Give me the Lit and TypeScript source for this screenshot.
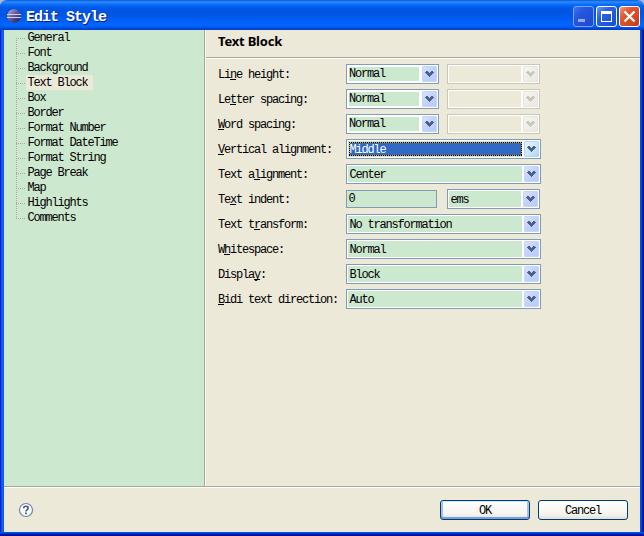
import { LitElement, html, svg, css, nothing } from "lit";
import { customElement, property } from "lit/decorators.js";
import { classMap } from "lit/directives/class-map.js";

const PAGES = [
  "General", "Font", "Background", "Text Block", "Box", "Border", "Format Number",
  "Format DateTime", "Format String", "Page Break", "Map", "Highlights", "Comments",
];

type Kind = "unit" | "wide" | "indent";
interface Row { before: string; key: string; after: string; value: string; kind: Kind; focus?: boolean; }

const ROWS: Row[] = [
  { before: "Li", key: "n", after: "e height:", value: "Normal", kind: "unit" },
  { before: "Le", key: "t", after: "ter spacing:", value: "Normal", kind: "unit" },
  { before: "", key: "W", after: "ord spacing:", value: "Normal", kind: "unit" },
  { before: "", key: "V", after: "ertical alignment:", value: "Middle", kind: "wide", focus: true },
  { before: "Text a", key: "l", after: "ignment:", value: "Center", kind: "wide" },
  { before: "Te", key: "x", after: "t indent:", value: "0", kind: "indent" },
  { before: "Text t", key: "r", after: "ansform:", value: "No transformation", kind: "wide" },
  { before: "W", key: "h", after: "itespace:", value: "Normal", kind: "wide" },
  { before: "Displa", key: "y", after: ":", value: "Block", kind: "wide" },
  { before: "", key: "B", after: "idi text direction:", value: "Auto", kind: "wide" },
];

@customElement("xp-combo")
export class XpCombo extends LitElement {
  @property() value = "";
  @property() variant = "wide";
  @property({ type: Boolean }) focused = false;

  static styles = css`
    :host { display: block; height: 20px; }
    .combo {
      box-sizing: border-box; height: 20px; border: 1px solid #7f9db9; background: #fff;
      display: flex; padding: 1px; gap: 2px;
    }
    .field {
      flex: 1; min-width: 0; background: #cce8cf; color: #000; height: 16px;
      line-height: 18px; padding-left: 1.5px; box-sizing: border-box; white-space: pre; overflow: hidden;
    }
    .arrow {
      width: 15px; height: 16px; flex: none; border-radius: 2px;
      background: linear-gradient(135deg, #dce6ff, #c3d3fd 45%, #b5caf8);
      box-shadow: inset 0 0 0 1px #c7d5fb;
    }
    .arrow svg { display: block; }
    .small { gap: 3px; }
    .small .field { margin: 1px 0 1px 1px; height: 14px; line-height: 14px; padding-left: 0; }
    .disabled { border-color: #c9c7ba; }
    .disabled .field { background: #ece9d8; }
    .disabled .arrow { background: linear-gradient(135deg, #f7f7f3, #e8e8df); box-shadow: inset 0 0 0 1px #e6e5dc; }
    .focused .field { padding: 1px 0 1px 1px; }
    .selection {
      height: 14px; line-height: 16px; box-sizing: border-box; padding-left: 0.5px; color: #fff;
      background:
        repeating-linear-gradient(90deg, #000 0 1px, #e8a33c 1px 2px) 0 0 / 100% 1px no-repeat,
        repeating-linear-gradient(90deg, #000 0 1px, #e8a33c 1px 2px) 0 100% / 100% 1px no-repeat,
        repeating-linear-gradient(#000 0 1px, #e8a33c 1px 2px) 0 0 / 1px 100% no-repeat,
        repeating-linear-gradient(#000 0 1px, #e8a33c 1px 2px) 100% 0 / 1px 100% no-repeat,
        #316ac5;
    }
    .focused .arrow { background: linear-gradient(135deg, #edf7ff, #c6e4fd 60%, #a9d2f8); box-shadow: inset 0 0 0 1px #b5d5f5; }
  `;

  render() {
    const color = this.variant === "disabled" ? "#c9c7ba" : "#4d6185";
    return html`<div class=${classMap({ combo: true, [this.variant]: true, focused: this.focused })}>
      <div class="field">${this.focused ? html`<div class="selection">${this.value}</div>` : this.value}</div>
      <div class="arrow">
        <svg width="15" height="16" viewBox="0 0 15 16" shape-rendering="crispEdges">
          <path fill=${color} d="M3 6h1V5h2v1h1v1h1V6h1V5h2v1h1v1h-1v1h-1v1H9v1H8v1H7v-1H6V9H5V8H4V7H3z" />
        </svg>
      </div>
    </div>`;
  }
}

@customElement("app-root")
export class AppRoot extends LitElement {
  static styles = css`
    :host {
      display: block; width: 644px; height: 536px; overflow: hidden; background: #a7b8e0;
      font: 12px "Liberation Mono", monospace; letter-spacing: -1.2px; color: #000;
    }
    .window {
      box-sizing: border-box; width: 644px; height: 536px; display: flex; flex-direction: column;
      border-radius: 7px 7px 0 0; overflow: hidden; padding: 0 4px 4px;
      background:
        linear-gradient(#0050e8 0 1px, #0038d8 1px 2px, #0018a8 2px 3px, #00138c 3px) 0 100% / 100% 4px no-repeat,
        linear-gradient(90deg, #0019cf, #0831d9 1px, #166aee 2px, #0855dd 4px, transparent 4px, transparent 640px, #0054e8 640px, #0040dc 642px, #001ea0 642px, #00138c);
    }
    .titlebar {
      height: 30px; flex: none; margin: 0 -4px; padding: 0 4px 0 7px; box-sizing: border-box;
      display: flex; align-items: center;
      background: linear-gradient(#0958d8 0, #2f8cff 2px, #1b7cfb 3px, #056af8 5px, #0058e6 8px, #0055e2 14px, #005df4 20px, #0067ff 25px, #005bf0 27px, #0044d0 29px, #003bc2);
    }
    .logo { flex: none; display: block; margin-top: 2px; }
    .title {
      flex: 1; margin: 4px 0 0 5px; color: #fff; font-size: 15px; font-weight: bold;
      letter-spacing: -1px; white-space: pre; text-shadow: 1px 1px #0a1f80;
    }
    .controls { display: flex; gap: 2px; margin-top: 3px; }
    .control { display: block; }
    .main { height: 456px; flex: none; display: flex; background: #ece9d8; }
    .tree { width: 200px; flex: none; background: #cce8cf; border-right: 1px solid #aca899; height: 456px; }
    .node { height: 15px; line-height: 16px; display: flex; padding-left: 12px; white-space: pre; }
    .branch { width: 10px; height: 15px; flex: none; }
    .branch svg { display: block; }
    .caption { padding: 0 5.5px 0 1.5px; height: 15px; }
    .selected { background: #ece9d8; }
    .panel { flex: 1; border-left: 1px solid #fff; }
    .heading {
      height: 28px; box-sizing: border-box; padding: 2px 0 0 12px;
      font: bold 13px/18px "Noto Sans", "Open Sans", sans-serif; letter-spacing: -0.2px;
      border-bottom: 1px solid #aca899; box-shadow: 0 1px #fff;
    }
    .form { padding: 6px 0 0 12px; display: grid; gap: 5px; }
    .row { display: flex; height: 20px; }
    .label { width: 128px; flex: none; line-height: 22px; white-space: pre; }
    .key { text-decoration: underline; text-underline-offset: 1px; text-decoration-thickness: 1px; text-decoration-skip-ink: none; }
    .short { width: 93px; }
    .long { width: 195px; }
    .second { width: 93px; margin-left: 8px; }
    .after-text { margin-left: 10px; }
    .text {
      width: 91px; height: 18px; margin-top: 1px; box-sizing: border-box; border: 1px solid #7f9db9;
      background: #cce8cf; line-height: 16px; padding-left: 1.5px;
    }
    .footer {
      flex: 1; background: #ece9d8; border-top: 1px solid #aca899; box-shadow: inset 0 1px #fff;
      display: flex; align-items: flex-start; padding: 13px 12px 0 14px; gap: 8px;
    }
    .help { display: block; margin: 2px auto 0 0; }
    .button {
      width: 90px; height: 20px; box-sizing: border-box; border: 1px solid #003c74; border-radius: 3px;
      background: linear-gradient(#fff, #f4f4ef 75%, #e2dfd3); text-align: center;
      padding: 1px 0 0; font: inherit; letter-spacing: inherit; color: #000;
    }
    .default { box-shadow: inset 0 1px #cee7ff, inset 0 -2px #7d9de0, inset 2px 0 #a6c0f0, inset -2px 0 #a6c0f0; }
  `;

  private control(kind: "min" | "max" | "close") {
    const close = kind === "close";
    const min = kind === "min";
    return html`<svg class="control" width="21" height="21" viewBox="0 0 21 21">
      <defs>
        <linearGradient id="face-${kind}" x1="0" y1="0" x2="1" y2="1">
          <stop offset="0" stop-color=${close ? "#f09a80" : min ? "#3b78ea" : "#6b9cf8"} />
          <stop offset=".35" stop-color=${close ? "#e2562f" : min ? "#2558dd" : "#2a62e2"} />
          <stop offset="1" stop-color=${close ? "#c93a12" : min ? "#1b48cf" : "#134fd0"} />
        </linearGradient>
      </defs>
      <rect x=".5" y=".5" width="20" height="20" rx="2.5" fill="url(#face-${kind})" stroke=${min ? "#7fa0f0" : "#fff"} />
      ${close
        ? svg`<path d="M5.5 5.5l10 10M15.5 5.5l-10 10" stroke="#fff" stroke-width="2.3" />`
        : min
          ? svg`<path d="M5 13h7v3H5z" fill="#91a7ee" />`
          : svg`<path fill="#fff" fill-rule="evenodd" d="M5 5h11v11H5zM6 8v7h9V8z" />`}
    </svg>`;
  }

  private branch(i: number) {
    const last = i === PAGES.length - 1;
    return html`<span class="branch"><svg width="10" height="15" shape-rendering="crispEdges">
      <path d="M.5 ${i === 0 ? 8 : i % 2}V${last ? 9 : 15}" stroke="#aca899" stroke-dasharray="1 1" />
      <path d="M0 8.5H9" stroke="#aca899" stroke-dasharray="1 1" />
    </svg></span>`;
  }

  private editor(row: Row) {
    if (row.kind === "wide") {
      return html`<xp-combo class="long" .value=${row.value} .focused=${!!row.focus}></xp-combo>`;
    }
    if (row.kind === "indent") {
      return html`<div class="text">${row.value}</div>
        <xp-combo class="second after-text" value="ems"></xp-combo>`;
    }
    return html`<xp-combo class="short" variant="small" .value=${row.value}></xp-combo>
      <xp-combo class="second" variant="disabled"></xp-combo>`;
  }

  render() {
    return html`<div class="window">
      <div class="titlebar">
        <svg class="logo" width="14" height="14" viewBox="0 0 14 14">
          <defs><linearGradient id="orb" x1="0" y1="0" x2="1" y2="1">
            <stop offset="0" stop-color="#d4b4c4" /><stop offset=".45" stop-color="#665a9c" /><stop offset="1" stop-color="#211650" />
          </linearGradient></defs>
          <circle cx="7" cy="7" r="6.8" fill="url(#orb)" />
          <path d="M0 5.5h14M0 8.5h14" stroke="#c9d3f2" />
        </svg>
        <span class="title">Edit Style</span>
        <div class="controls">${this.control("min")}${this.control("max")}${this.control("close")}</div>
      </div>
      <div class="main">
        <div class="tree">${PAGES.map((p, i) => html`<div class="node">${this.branch(i)}<span
          class=${classMap({ caption: true, selected: p === "Text Block" })}>${p}</span></div>`)}</div>
        <div class="panel">
          <div class="heading">Text Block</div>
          <div class="form">${ROWS.map((r) => html`<div class="row">
            <span class="label">${r.before || nothing}<span class="key">${r.key}</span>${r.after}</span>${this.editor(r)}
          </div>`)}</div>
        </div>
      </div>
      <div class="footer">
        <svg class="help" width="16" height="16" viewBox="0 0 16 16">
          <circle cx="8" cy="8" r="6.5" fill="#fff" stroke="#6f86a8" stroke-width="1.2" />
          <path d="M5.7 6.2C5.7 3.7 10.2 3.7 10.2 6.1C10.2 7.7 8 7.7 8 9.6" fill="none" stroke="#40578c" stroke-width="1.6" />
          <path d="M7.1 10.6h1.8v1.6H7.1z" fill="#40578c" />
        </svg>
        <button class="button default">OK</button>
        <button class="button">Cancel</button>
      </div>
    </div>`;
  }
}
